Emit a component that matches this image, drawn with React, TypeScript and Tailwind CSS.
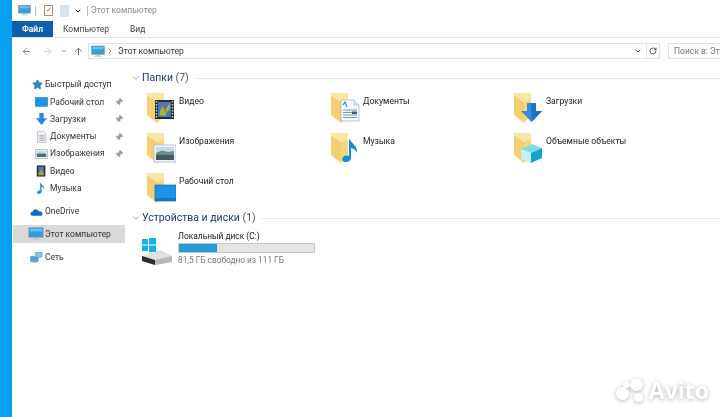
import { ArrowLeft, ArrowRight, ArrowUp, ChevronDown, ChevronRight, Pin, RotateCw, Star } from "lucide-react";
import type { ReactNode } from "react";

const FONT = "font-['Roboto','Noto_Sans',sans-serif]";

function Monitor({ className }: { className?: string }) {
  return (
    <svg viewBox="0 0 18 16" className={className}>
      <rect x="1" y="1" width="16" height="10.5" fill="#2f9fe0" stroke="#7d8b99" strokeWidth="1" />
      <rect x="2" y="2" width="14" height="3" fill="#69c2f2" />
      <rect x="7" y="11.5" width="4" height="2" fill="#aab4bd" />
      <rect x="4" y="13.5" width="10" height="1.3" fill="#c5ccd3" />
    </svg>
  );
}

function FolderBase({ children }: { children?: ReactNode }) {
  return (
    <svg viewBox="0 0 30 32" className="h-8 w-[30px]">
      <path d="M1 3 L1 23 L11 31 L11 10 Z" fill="#f3cf6f" />
      <path d="M1 1 L18 1 L18 24 L11 24 L11 10 L1 3 Z" fill="#fbe6a6" />
      <path d="M11 10 L18 7 L18 24 L11 31 Z" fill="#f6d67f" />
      {children}
    </svg>
  );
}

const FolderVideo = () => (
  <FolderBase>
    <rect x="9" y="8" width="19" height="19" fill="#2a2a2a" />
    <rect x="12" y="10" width="13" height="15" fill="#3a78d8" />
    <path d="M13 23 L16 14 L19 18 L24 11 L24 16 L19 24 Z" fill="#a8b82e" />
    <path d="M15 11 L21 21" stroke="#e0503a" strokeWidth="1.2" />
    <path d="M10.5 9 V26 M26.5 9 V26" stroke="#d8d8d8" strokeWidth="1.4" strokeDasharray="1.5 1.5" />
  </FolderBase>
);

const FolderDocs = () => (
  <FolderBase>
    <path d="M11 8 H24 L29 13 V29 H11 Z" fill="#f6f8fa" stroke="#9fb0bd" strokeWidth="0.7" />
    <path d="M24 8 V13 H29" fill="#d9e2e9" stroke="#9fb0bd" strokeWidth="0.5" />
    <path d="M13 13 L15 10 L17 15" fill="none" stroke="#2f7fd0" strokeWidth="1.1" />
    <path d="M13 18 H27 M13 20.5 H22 M13 23 H27 M13 25.5 H27" stroke="#6e8aa0" strokeWidth="0.9" />
    <rect x="22" y="19.5" width="5" height="2.5" fill="#3f5a70" />
  </FolderBase>
);

const FolderDownloads = () => (
  <FolderBase>
    <path d="M14 11 H23 V19 H29 L18.5 30 L8 19 H14 Z" fill="#2f8fe0" />
    <path d="M18.5 11 H23 V19 H29 L18.5 30 Z" fill="#1e74c4" />
  </FolderBase>
);

const FolderPictures = () => (
  <FolderBase>
    <rect x="8" y="13" width="22" height="17" fill="#f2f5f7" stroke="#a4b3bf" strokeWidth="0.7" />
    <rect x="10" y="15" width="18" height="6" fill="#c3dbe8" />
    <path d="M10 21 L16 18.5 L22 20 L28 19 V23 H10 Z" fill="#6d8a86" />
    <rect x="10" y="23" width="18" height="5" fill="#3f5d60" />
  </FolderBase>
);

const FolderMusic = () => (
  <FolderBase>
    <path d="M19 6 C20 11 28 13 27 21 C26 18 23 16.5 21 16 L21 26 C21 29.5 16 31 13.5 29.5 C11 28 12.5 24 16 23.5 C17 23.4 18 23.6 19 24 Z" fill="#0f8fdc" />
  </FolderBase>
);

const FolderDesktop = () => (
  <FolderBase>
    <rect x="9" y="13" width="21" height="16" fill="#1f93e8" stroke="#0d6ab0" strokeWidth="0.7" />
    <rect x="9" y="26" width="21" height="3" fill="#1577c4" />
  </FolderBase>
);

const Folder3d = () => (
  <FolderBase>
    <path d="M8 17 L19 12 L29 16 L18 21 Z" fill="#7fdcea" />
    <path d="M8 17 L18 21 L18 31 L8 27 Z" fill="#c6f0f4" />
    <path d="M18 21 L29 16 L29 26 L18 31 Z" fill="#14a5c4" />
  </FolderBase>
);

function DiskIcon() {
  return (
    <svg viewBox="0 0 32 28" className="h-7 w-8">
      <rect x="1" y="1" width="6" height="5.5" fill="#16b1e4" />
      <rect x="8" y="0" width="7" height="6.5" fill="#16b1e4" />
      <rect x="1" y="7.5" width="6" height="5.5" fill="#16b1e4" />
      <rect x="8" y="7.5" width="7" height="6.5" fill="#16b1e4" />
      <path d="M1 18 L20 12 L31 18 L31 24 L14 27 L1 23 Z" fill="#dfe2e4" />
      <path d="M14 22 L31 18 L31 24 L14 27 Z" fill="#b4b8bc" />
      <path d="M1 18 L14 22 L14 27 L1 23 Z" fill="#2b2b2b" />
    </svg>
  );
}

function NavIcon({ kind }: { kind: string }) {
  const cls = "h-[12px] w-[13px]";
  if (kind === "desktop") {
    return (
      <svg viewBox="0 0 15 14" className={cls}>
        <rect x="0.5" y="2" width="14" height="10" fill="#1f93e8" stroke="#0d6ab0" strokeWidth="0.6" />
      </svg>
    );
  }
  if (kind === "down") {
    return (
      <svg viewBox="0 0 15 14" className={cls}>
        <path d="M5 0 H10 V6 H14 L7.5 14 L1 6 H5 Z" fill="#2f86dc" />
      </svg>
    );
  }
  if (kind === "docs") {
    return (
      <svg viewBox="0 0 15 14" className={cls}>
        <path d="M3 0.5 H10 L12.5 3 V13.5 H3 Z" fill="#f6f8fa" stroke="#8fa1af" strokeWidth="0.7" />
        <path d="M5 5 H11 M5 7 H11 M5 9 H11 M5 11 H11" stroke="#6e8aa0" strokeWidth="0.8" />
      </svg>
    );
  }
  if (kind === "pics") {
    return (
      <svg viewBox="0 0 15 14" className={cls}>
        <rect x="0.5" y="2" width="14" height="10" fill="#f2f5f7" stroke="#8f9ca7" strokeWidth="0.7" />
        <rect x="2" y="3.5" width="11" height="3" fill="#c3dbe8" />
        <rect x="2" y="6.5" width="11" height="4" fill="#4f6d70" />
      </svg>
    );
  }
  if (kind === "video") {
    return (
      <svg viewBox="0 0 15 14" className={cls}>
        <rect x="2" y="0.5" width="10" height="13" fill="#2f2f2f" />
        <rect x="4" y="2" width="6" height="10" fill="#4a7bc0" />
        <path d="M4 10 L7 5 L10 9 V12 H4 Z" fill="#9aa83a" />
      </svg>
    );
  }
  if (kind === "music") {
    return (
      <svg viewBox="0 0 15 14" className={cls}>
        <path d="M6 0 C6.5 3 11 4 10.5 8 C10 6.5 8.5 5.5 7.5 5.2 L7.5 11.5 C7.5 13.5 4.5 14.5 3 13.5 C1.8 12.5 2.8 10.2 5 10 C5.4 10 5.7 10 6 10.2 Z" fill="#0f8fdc" />
      </svg>
    );
  }
  if (kind === "cloud") {
    return (
      <svg viewBox="0 0 15 14" className={cls}>
        <path d="M3.5 11.5 C1 11.5 0 9.7 0.6 8.2 C1 7.2 2 6.8 3 6.8 C3.5 4.6 5.4 3.5 7.3 4 C8.6 4.3 9.4 5.2 9.8 6.2 C12 5.8 14.5 7.2 14.5 9.3 C14.5 10.8 13.3 11.5 12 11.5 Z" fill="#0f6cc4" />
      </svg>
    );
  }
  if (kind === "pc") {
    return <Monitor className="h-[14px] w-[16px]" />;
  }
  if (kind === "net") {
    return (
      <svg viewBox="0 0 15 14" className={cls}>
        <rect x="0.5" y="6" width="9" height="6.5" fill="#4fa3dc" stroke="#7d8b99" strokeWidth="0.5" />
        <rect x="6" y="1.5" width="8" height="6" fill="#7cc4ec" stroke="#7d8b99" strokeWidth="0.5" />
        <path d="M3 13.5 H8" stroke="#aab4bd" strokeWidth="1" />
      </svg>
    );
  }
  return <Star className="h-[11px] w-[11px] fill-[#2b86c5] text-[#2b86c5]" />;
}

function NavItem({ kind, label, pinned }: { kind: string; label: string; pinned?: boolean }) {
  return (
    <div className="flex h-[17.3px] items-center pl-[22px]">
      <div className="flex w-[14px] justify-center">
        <NavIcon kind={kind} />
      </div>
      <span className="ml-[2px] flex-1 whitespace-nowrap text-[8.5px] text-[#333]">{label}</span>
      {pinned && <Pin className="mr-[2px] h-[8px] w-[8px] rotate-45 fill-[#999] text-[#999]" />}
    </div>
  );
}

function RootItem({ kind, label, active }: { kind: string; label: string; active?: boolean }) {
  return (
    <div className={`ml-[1px] flex h-[17.3px] items-center pl-[15px] ${active ? "bg-[#d9d9d9]" : ""}`}>
      <div className="flex w-[16px] justify-center">
        <NavIcon kind={kind} />
      </div>
      <span className="ml-[1px] whitespace-nowrap text-[8.5px] text-[#333]">{label}</span>
    </div>
  );
}

function Section({ title, count }: { title: string; count: string }) {
  return (
    <div className="flex h-[16px] items-center">
      <ChevronDown className="h-[10px] w-[10px] text-[#8a8a8a]" />
      <span className="ml-[1px] whitespace-nowrap text-[10.5px] text-[#1e3a7a]">
        {title} <span className="text-[#555]">{count}</span>
      </span>
      <div className="ml-[6px] h-px flex-1 bg-[#e8e8e8]" />
    </div>
  );
}

function FolderTile({ label, icon }: { label: string; icon: ReactNode }) {
  return (
    <div className="flex h-10 items-start">
      {icon}
      <span className="ml-[3px] mt-[1px] whitespace-nowrap text-[8.6px] leading-[16px] text-[#222]">{label}</span>
    </div>
  );
}

function AvitoMark() {
  return (
    <div className="absolute bottom-[14px] right-[11px] flex items-center text-white [filter:drop-shadow(0_1px_2px_rgba(0,0,0,0.3))]">
      <div className="relative h-[25px] w-[27px]">
        <div className="absolute left-0 top-[9px] h-[13px] w-[13px] rounded-full bg-white" />
        <div className="absolute left-[7px] top-[3px] h-[7px] w-[7px] rounded-full bg-white" />
        <div className="absolute left-[14px] top-0 h-[13px] w-[13px] rounded-full bg-white" />
        <div className="absolute left-[18px] top-[15px] h-[9px] w-[9px] rounded-full bg-white" />
      </div>
      <span className="ml-[6px] font-['Open_Sans',sans-serif] text-[23px] font-bold leading-none">Avito</span>
    </div>
  );
}

export default function App() {
  return (
    <div className={`relative flex h-[417px] w-[720px] overflow-hidden bg-white ${FONT} blur-[0.3px]`}>
      <div className="w-3 shrink-0 bg-[#07a0ef]" />
      <div className="flex min-w-0 flex-1 flex-col">
        {/* title bar */}
        <div className="flex h-[21px] items-center pl-[6px]">
          <Monitor className="h-[13px] w-[13px]" />
          <div className="ml-[4px] h-[10px] w-px bg-[#bbb]" />
          <div className="ml-[8px] flex h-[11px] w-[9px] items-center justify-center border border-[#a98f78] text-[7px] leading-none text-[#c0542e]">✓</div>
          <div className="ml-[7px] h-[12px] w-[9px] bg-[#d6e3f1]" />
          <ChevronDown className="ml-[5px] h-[8px] w-[8px] text-[#222]" strokeWidth={3} />
          <div className="ml-[5px] h-[10px] w-px bg-[#bbb]" />
          <span className="ml-[3px] text-[8.5px] text-[#8a8a8a]">Этот компьютер</span>
        </div>
        {/* ribbon tabs */}
        <div className="flex h-[17px] items-stretch border-b border-[#e3e3e3] text-[8.5px] text-[#444]">
          <div className="flex w-[41px] items-center justify-center bg-[#0b60ad] font-semibold text-white">Файл</div>
          <div className="ml-[10px] flex items-center">Компьютер</div>
          <div className="ml-[21px] flex items-center">Вид</div>
        </div>
        {/* address row */}
        <div className="flex h-[26px] items-center pl-[9px]">
          <ArrowLeft className="h-[11px] w-[11px] text-[#777]" strokeWidth={2} />
          <ArrowRight className="ml-[10px] h-[11px] w-[11px] text-[#d0d0d0]" strokeWidth={2} />
          <ChevronDown className="ml-[7px] h-[8px] w-[8px] text-[#888]" strokeWidth={2.5} />
          <ArrowUp className="ml-[5px] h-[11px] w-[11px] text-[#666]" strokeWidth={2} />
          <div className="ml-[4px] flex h-[16px] w-[572px] items-center border border-[#e2e2e2] pl-[2px]">
            <Monitor className="h-[13px] w-[14px]" />
            <ChevronRight className="ml-[1px] h-[8px] w-[8px] text-[#555]" />
            <span className="ml-[4px] text-[8.5px] text-[#333]">Этот компьютер</span>
            <div className="flex-1" />
            <ChevronDown className="mr-[4px] h-[8px] w-[8px] text-[#555]" strokeWidth={3} />
            <div className="flex h-full w-[13px] items-center justify-center border-l border-[#e2e2e2]">
              <RotateCw className="h-[8px] w-[8px] text-[#444]" strokeWidth={2.5} />
            </div>
          </div>
          <div className="ml-[8px] flex h-[16px] flex-1 items-center overflow-hidden border-y border-l border-[#e2e2e2] pl-[5px] text-[8.5px] whitespace-nowrap text-[#777]">
            Поиск в: Эт
          </div>
        </div>
        <div className="flex min-h-0 flex-1">
          {/* nav pane */}
          <div className="w-[113px] shrink-0 pt-[12px]">
            <div className="flex h-[17.3px] items-center pl-[20px]">
              <NavIcon kind="star" />
              <span className="ml-[2px] whitespace-nowrap text-[8.5px] text-[#333]">Быстрый доступ</span>
            </div>
            <NavItem kind="desktop" label="Рабочий стол" pinned />
            <NavItem kind="down" label="Загрузки" pinned />
            <NavItem kind="docs" label="Документы" pinned />
            <NavItem kind="pics" label="Изображения" pinned />
            <NavItem kind="video" label="Видео" />
            <NavItem kind="music" label="Музыка" />
            <div className="mt-[6px]">
              <RootItem kind="cloud" label="OneDrive" />
            </div>
            <div className="mt-[5px]">
              <RootItem kind="pc" label="Этот компьютер" active />
            </div>
            <div className="mt-[6px]">
              <RootItem kind="net" label="Сеть" />
            </div>
          </div>
          {/* content */}
          <div className="min-w-0 flex-1 pl-[6px] pt-[6px]">
            <Section title="Папки" count="(7)" />
            <div className="mt-[6px] grid grid-cols-[184px_183px_1fr] pl-[15px]">
              <FolderTile label="Видео" icon={<FolderVideo />} />
              <FolderTile label="Документы" icon={<FolderDocs />} />
              <FolderTile label="Загрузки" icon={<FolderDownloads />} />
              <FolderTile label="Изображения" icon={<FolderPictures />} />
              <FolderTile label="Музыка" icon={<FolderMusic />} />
              <FolderTile label="Объемные объекты" icon={<Folder3d />} />
              <FolderTile label="Рабочий стол" icon={<FolderDesktop />} />
            </div>
            <div className="mt-[-2px]">
              <Section title="Устройства и диски" count="(1)" />
            </div>
            <div className="mt-[4px] flex pl-[10px]">
              <div className="pt-[8px]">
                <DiskIcon />
              </div>
              <div className="ml-[5px] flex w-[137px] flex-col">
                <span className="whitespace-nowrap text-[8.4px] leading-[12px] text-[#222]">Локальный диск (C:)</span>
                <div className="mt-[1px] h-[10px] border border-[#c9c9c9] bg-[#e4e4e4]">
                  <div className="h-full w-[28%] bg-[#2a9ad6]" />
                </div>
                <span className="mt-[1px] whitespace-nowrap text-[8.3px] leading-[12px] text-[#777]">81,5 ГБ свободно из 111 ГБ</span>
              </div>
            </div>
          </div>
        </div>
      </div>
      <AvitoMark />
    </div>
  );
}
